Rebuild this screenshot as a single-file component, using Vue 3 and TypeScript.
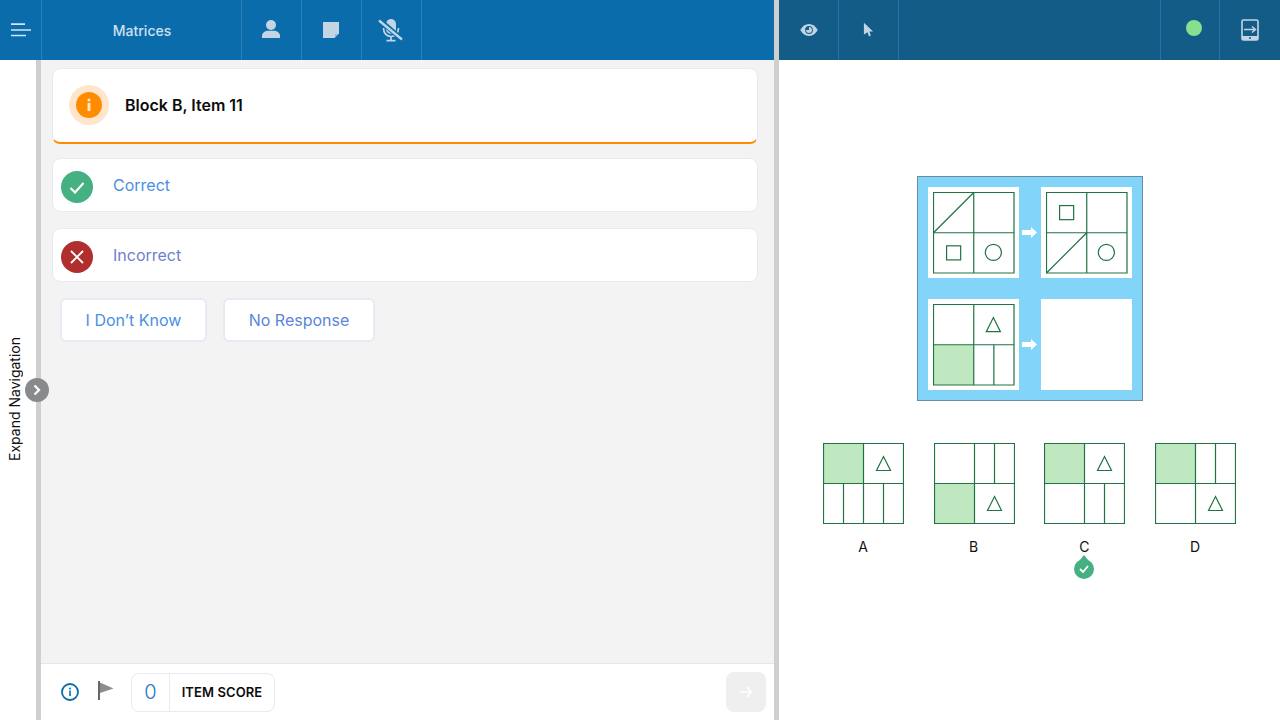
<script setup lang="ts">
interface Puzzle {
  shade?: [number, number]
  lines: [number, number, number, number][]
  square?: [number, number]
  circle?: boolean
  triangle?: [number, number]
}

const samples: (Puzzle | null)[] = [
  { lines: [[0, 40, 40, 0]], square: [13, 53], circle: true },
  { lines: [[0, 80, 40, 40]], square: [13, 13], circle: true },
  { shade: [0, 40], lines: [[60, 40, 60, 80]], triangle: [59.5, 13] },
  null
]

const options: { label: string; correct?: boolean; puzzle: Puzzle }[] = [
  { label: 'A', puzzle: { shade: [0, 0], lines: [[20, 40, 20, 80], [60, 40, 60, 80]], triangle: [60, 13] } },
  { label: 'B', puzzle: { shade: [0, 40], lines: [[60, 0, 60, 40]], triangle: [60, 53] } },
  { label: 'C', correct: true, puzzle: { shade: [0, 0], lines: [[60, 40, 60, 80]], triangle: [60, 13] } },
  { label: 'D', puzzle: { shade: [0, 0], lines: [[60, 0, 60, 40]], triangle: [60, 53] } }
]

const trianglePoints = (t: [number, number]) =>
  `${t[0]},${t[1]} ${t[0] + 7},${t[1] + 14} ${t[0] - 7},${t[1] + 14}`
</script>

<template>
  <div class="app">
    <section class="left">
      <header class="bar bar-left">
        <button class="tool burger">
          <svg width="22" height="14" viewBox="0 0 22 14"><path d="M1 1.200h14M1 7h20M1 12.500h15" stroke="#d5e3ee" stroke-width="1.700" fill="none" /></svg>
        </button>
        <div class="tool title">Matrices</div>
        <button class="tool">
          <svg class="ic-person" width="18" height="18" viewBox="0 0 18 18" fill="#c3d5e5"><circle cx="9" cy="5" r="5" /><path d="M0 18v-2.500C0 13 3 10.700 6 10.700h6c3 0 6 2.300 6 4.800V18z" /></svg>
        </button>
        <button class="tool">
          <svg class="ic-note" width="16" height="16" viewBox="0 0 16 16"><path d="M0 0h16v11.500L11.500 16H0z" fill="#c3d5e5" /><path d="M12 12.200h3L12 15.200z" fill="#8fb3cf" /></svg>
        </button>
        <button class="tool">
          <svg class="ic-mic" width="26" height="24" viewBox="0 0 26 24" fill="none"><rect x="8" y="1" width="10" height="15" rx="5" fill="#c3d5e5" /><path d="M5.500 10c0 5 3 8.500 7.500 8.500s7.500-3.500 7.500-8.500M13 18.500v3.500M8.500 22.700h9" stroke="#c3d5e5" stroke-width="1.700" /><path d="M1 1.500l23 20" stroke="#0a6cab" stroke-width="5" /><path d="M1 2.500l23 19" stroke="#c3d5e5" stroke-width="2.300" /></svg>
        </button>
      </header>
      <div class="body">
        <aside class="rail">
          <span class="rail-text">Expand Navigation</span>
        </aside>
        <div class="rail-edge">
          <span class="expand">
            <svg width="10" height="12" viewBox="0 0 10 12"><path d="M2.500 1.500L7 6l-4.500 4.500" stroke="#fff" stroke-width="2.200" fill="none" /></svg>
          </span>
        </div>
        <main class="main">
          <div class="scroll">
            <div class="card head-card">
              <span class="halo">
                <span class="info-dot">
                  <svg width="6" height="14" viewBox="0 0 6 14" fill="#ffe3c2"><circle cx="3" cy="2" r="1.600" /><rect x="1.500" y="5" width="3" height="8" rx=".5" /></svg>
                </span>
              </span>
              <span class="head-text">Block B, Item 11</span>
            </div>
            <div class="card answer">
              <span class="dot green">
                <svg width="16" height="13" viewBox="0 0 16 13"><path d="M1.500 7l4.500 4.500L14.500 2" stroke="#fff" stroke-width="2.200" fill="none" /></svg>
              </span>
              <span class="answer-text">Correct</span>
            </div>
            <div class="card answer">
              <span class="dot red">
                <svg width="16" height="16" viewBox="0 0 16 16"><path d="M2 2l12 12M14 2L2 14" stroke="#fff" stroke-width="1.800" fill="none" /></svg>
              </span>
              <span class="answer-text incorrect">Incorrect</span>
            </div>
            <div class="actions">
              <button class="action dk">I Don’t Know</button>
              <button class="action nr">No Response</button>
            </div>
          </div>
          <footer class="foot">
            <svg width="20" height="20" viewBox="0 0 20 20" fill="none"><circle cx="10" cy="10" r="8" stroke="#0a6cab" stroke-width="1.800" /><circle cx="10" cy="6.500" r="1" fill="#0a6cab" /><rect x="9.200" y="8.500" width="1.600" height="5.500" fill="#0a6cab" /></svg>
            <svg class="flag" width="18" height="20" viewBox="0 0 18 20"><rect x="1" y="0" width="2" height="19" fill="#666" /><path d="M3 1.500l13.500 6L3 12z" fill="#8c8c8c" /></svg>
            <div class="score">
              <span class="score-num">0</span>
              <span class="score-label">ITEM SCORE</span>
            </div>
            <button class="next">
              <svg width="14" height="14" viewBox="0 0 14 14"><path d="M1 7h11M7.500 2L12.500 7l-5 5" stroke="#fff" stroke-width="1.500" fill="none" /></svg>
            </button>
          </footer>
        </main>
      </div>
    </section>

    <section class="right">
      <header class="bar bar-right">
        <button class="tool r-tool">
          <svg width="18" height="12" viewBox="0.500 0.500 19 13"><path d="M0.500 7c2.500-4 5.500-6.500 9.500-6.500s7 2.500 9.500 6.500c-2.500 4-5.500 6.500-9.500 6.500S3 11 0.500 7z" fill="#c3d5e5" /><circle cx="10" cy="7" r="4.200" fill="#135c88" /><path d="M10 3.800A3.200 3.200 0 1 1 6.800 7H10z" fill="#c3d5e5" /></svg>
        </button>
        <button class="tool r-tool">
          <svg width="11" height="16" viewBox="0 0 12 16"><path d="M1 0l10 9.500H7l1.500 4.500-2 1L5 10.500 1 13z" fill="#c3d5e5" /></svg>
        </button>
        <div class="spacer"></div>
        <div class="tool r-tool status"><span class="status-dot"></span></div>
        <button class="tool r-tool">
          <svg width="18" height="22" viewBox="0 0 18 22" fill="none"><rect x="1" y="1" width="16" height="20" rx="1.500" stroke="#c3d5e5" stroke-width="1.600" /><rect x="1" y="17" width="16" height="4" fill="#c3d5e5" /><circle cx="9" cy="19" r="1" fill="#135c88" /><path d="M3 10.500h11M11 7.500l3.500 3-3.500 3" stroke="#c3d5e5" stroke-width="1.500" /></svg>
        </button>
      </header>
      <div class="stage">
        <div class="matrix">
          <template v-for="(p, i) in samples" :key="i">
            <div class="panel">
              <svg v-if="p" class="puzzle" width="82" height="82" viewBox="-.5 -.5 81.500 81.500">
                <rect v-if="p.shade" :x="p.shade[0]" :y="p.shade[1]" width="40" height="40" fill="#c0e8c0" />
                <path d="M0 0h80v80H0zM40 0v80M0 40h80" class="ink" />
                <line v-for="(l, n) in p.lines" :key="n" :x1="l[0]" :y1="l[1]" :x2="l[2]" :y2="l[3]" class="ink" />
                <rect v-if="p.square" :x="p.square[0]" :y="p.square[1]" width="14" height="14" class="ink" />
                <circle v-if="p.circle" cx="59.500" cy="59.500" r="8" class="ink" />
                <polygon v-if="p.triangle" :points="trianglePoints(p.triangle)" class="ink" />
              </svg>
            </div>
            <div v-if="i % 2 === 0" class="arrow">
              <svg width="15" height="11" viewBox="0 0 15 11"><path d="M0 3h9V0l6 5.500-6 5.500V8H0z" fill="#fff" /></svg>
            </div>
          </template>
        </div>
        <div class="options">
          <div v-for="o in options" :key="o.label" class="option">
            <svg class="puzzle" width="81" height="81" viewBox="-.5 -.5 81 81">
              <rect v-if="o.puzzle.shade" :x="o.puzzle.shade[0]" :y="o.puzzle.shade[1]" width="40" height="40" fill="#c0e8c0" />
              <path d="M0 0h80v80H0zM40 0v80M0 40h80" class="ink" />
              <line v-for="(l, n) in o.puzzle.lines" :key="n" :x1="l[0]" :y1="l[1]" :x2="l[2]" :y2="l[3]" class="ink" />
              <polygon v-if="o.puzzle.triangle" :points="trianglePoints(o.puzzle.triangle)" class="ink" />
            </svg>
            <span class="option-label">{{ o.label }}</span>
            <span v-if="o.correct" class="tick">
              <svg width="10" height="8" viewBox="0 0 10 8"><path d="M1 4l3 3 5-6" stroke="#fff" stroke-width="1.800" fill="none" /></svg>
            </span>
          </div>
        </div>
      </div>
    </section>
  </div>
</template>

<style>
html, body { margin: 0; background: #fff; }
</style>

<style scoped>
.app {
  width: 1280px;
  height: 720px;
  display: flex;
  overflow: hidden;
  font-family: Inter, "Liberation Sans", sans-serif;
}

.left {
  width: 774px;
  display: flex;
  flex-direction: column;
}

.right {
  width: 501px;
  margin-left: 5px;
  display: flex;
  flex-direction: column;
  position: relative;
}

.right::before {
  content: '';
  position: absolute;
  left: -5px;
  top: 0;
  bottom: 0;
  width: 5px;
  background: #cfcfcf;
}

.bar {
  height: 60px;
  flex: none;
  display: flex;
}

.bar-left { background: #0a6cab; }
.bar-right { background: #135c88; }

.tool {
  width: 60px;
  height: 60px;
  padding: 0;
  border: none;
  border-right: 1px solid rgba(255, 255, 255, 0.14);
  background: none;
  display: flex;
  align-items: center;
  justify-content: center;
  box-sizing: border-box;
}

.burger { width: 42px; }

.title {
  width: 200px;
  color: #cfe0ee;
  font-size: 14px;
  font-weight: 500;
  padding-left: 1px;
}

.ic-person { margin: 0 2px 2px 0; }
.ic-note { margin-right: 2px; }
.ic-mic { margin-right: 1px; }

.r-tool { border-right-color: #1f76ab; }

.spacer {
  flex: 1;
  border-right: 1px solid #1f76ab;
}

.status { width: 59px; border-right: 1px solid #1f76ab; }
.r-tool:last-child { width: 60px; border-right: none; }

.status-dot {
  width: 16px;
  height: 16px;
  border-radius: 50%;
  background: #86e08d;
  margin: -4px 0 0 8px;
}

.body {
  flex: 1;
  display: flex;
  min-height: 0;
}

.rail {
  width: 36px;
  background: #fff;
  display: flex;
  align-items: center;
  justify-content: center;
}

.rail-text {
  writing-mode: vertical-rl;
  transform: rotate(180deg);
  font-size: 14px;
  color: #111;
  margin: 0 8px 0 0;
  position: relative;
  top: 9px;
}

.rail-edge {
  width: 5px;
  background: #cfcfcf;
  position: relative;
}

.expand {
  position: absolute;
  left: -11px;
  top: 318px;
  width: 24px;
  height: 24px;
  border-radius: 50%;
  background: #888a8c;
  display: flex;
  align-items: center;
  justify-content: center;
  z-index: 1;
}

.main {
  flex: 1;
  display: flex;
  flex-direction: column;
  background: #f3f3f4;
}

.scroll {
  flex: 1;
  padding: 8px 16px 0 11px;
  display: flex;
  flex-direction: column;
}

.card {
  background: #fff;
  border: 1px solid #e6eaf2;
  border-radius: 8px;
  box-sizing: border-box;
  display: flex;
  align-items: center;
}

.head-card {
  height: 76px;
  padding: 0 0 2px 16px;
  border-bottom: 2px solid #ff8c00;
  margin-bottom: 14px;
}

.halo {
  width: 40px;
  height: 40px;
  border-radius: 50%;
  background: #ffe5cc;
  display: flex;
  align-items: center;
  justify-content: center;
  flex: none;
}

.info-dot {
  width: 26px;
  height: 26px;
  border-radius: 50%;
  background: #ff8c00;
  display: flex;
  align-items: center;
  justify-content: center;
}

.head-text {
  margin-left: 16px;
  font-size: 16px;
  font-weight: 600;
  color: #0c0c0c;
}

.answer {
  height: 54px;
  padding-left: 8px;
  margin-bottom: 16px;
}

.dot {
  width: 32px;
  height: 32px;
  margin-top: 4px;
  border-radius: 50%;
  display: flex;
  align-items: center;
  justify-content: center;
  flex: none;
}

.green { background: #45b081; }
.red { background: #b02e2e; }

.answer-text {
  margin-left: 20px;
  font-size: 16px;
  color: #4a8fdf;
}

.incorrect { color: #6f7fd0; }

.actions {
  display: flex;
  gap: 16px;
  padding-left: 8px;
}

.action {
  height: 44px;
  background: #fff;
  border: 2px solid #e6eaf5;
  border-radius: 6px;
  font-family: inherit;
  font-size: 16px;
  color: #4a8fdf;
  padding: 0;
}

.dk { width: 147px; }
.nr { width: 152px; color: #5b86d8; }

.foot {
  height: 57px;
  flex: none;
  box-sizing: border-box;
  border-top: 1px solid #e4e6ea;
  background: #fff;
  display: flex;
  align-items: center;
  padding: 0 8px 0 19px;
}

.flag { margin-left: 17px; margin-top: -2px; }

.score {
  margin-left: 16px;
  height: 39px;
  width: 144px;
  box-sizing: border-box;
  border: 1px solid #e6eaf2;
  border-radius: 8px;
  display: flex;
  align-items: center;
}

.score-num {
  width: 37px;
  height: 100%;
  border-right: 1px solid #e6eaf2;
  display: flex;
  align-items: center;
  justify-content: center;
  color: #1a78c2;
  font-size: 20px;
  font-weight: 300;
}

.score-label {
  flex: 1;
  text-align: center;
  font-size: 13px;
  font-weight: 600;
  letter-spacing: 0.1px;
  color: #0c0c0c;
}

.next {
  margin-left: auto;
  width: 40px;
  height: 40px;
  padding: 0;
  border: none;
  border-radius: 8px;
  background: #efefef;
  display: flex;
  align-items: center;
  justify-content: center;
}

.stage {
  flex: 1;
  display: flex;
  flex-direction: column;
  align-items: center;
  padding-top: 116px;
}

.matrix {
  box-sizing: border-box;
  width: 226px;
  height: 225px;
  padding: 10px;
  border: 1px solid #6c8ca0;
  background: #82d5f9;
  display: grid;
  grid-template-columns: 91px 22px 91px;
  grid-template-rows: 91px 91px;
  row-gap: 21px;
}

.panel {
  background: #fff;
  padding: 5px;
  box-sizing: border-box;
}

.arrow {
  display: flex;
  align-items: center;
  justify-content: center;
}

.puzzle { display: block; }

.ink {
  fill: none;
  stroke: #217346;
  stroke-width: 1.200;
}

.options {
  margin-top: 42px;
  display: flex;
  gap: 29.670px;
}

.option {
  width: 81px;
  display: flex;
  flex-direction: column;
  align-items: center;
  position: relative;
}

.option-label {
  margin-top: 15px;
  font-size: 14px;
  line-height: 16px;
  color: #111;
  padding-right: 1px;
}

.tick {
  position: absolute;
  top: 116px;
  left: 30px;
  width: 20px;
  height: 20px;
  border-radius: 50%;
  background: #45b081;
  display: flex;
  align-items: center;
  justify-content: center;
}

.tick::before {
  content: '';
  position: absolute;
  top: -4px;
  left: 6px;
  border: 4px solid transparent;
  border-top: none;
  border-bottom: 5px solid #45b081;
}
</style>
